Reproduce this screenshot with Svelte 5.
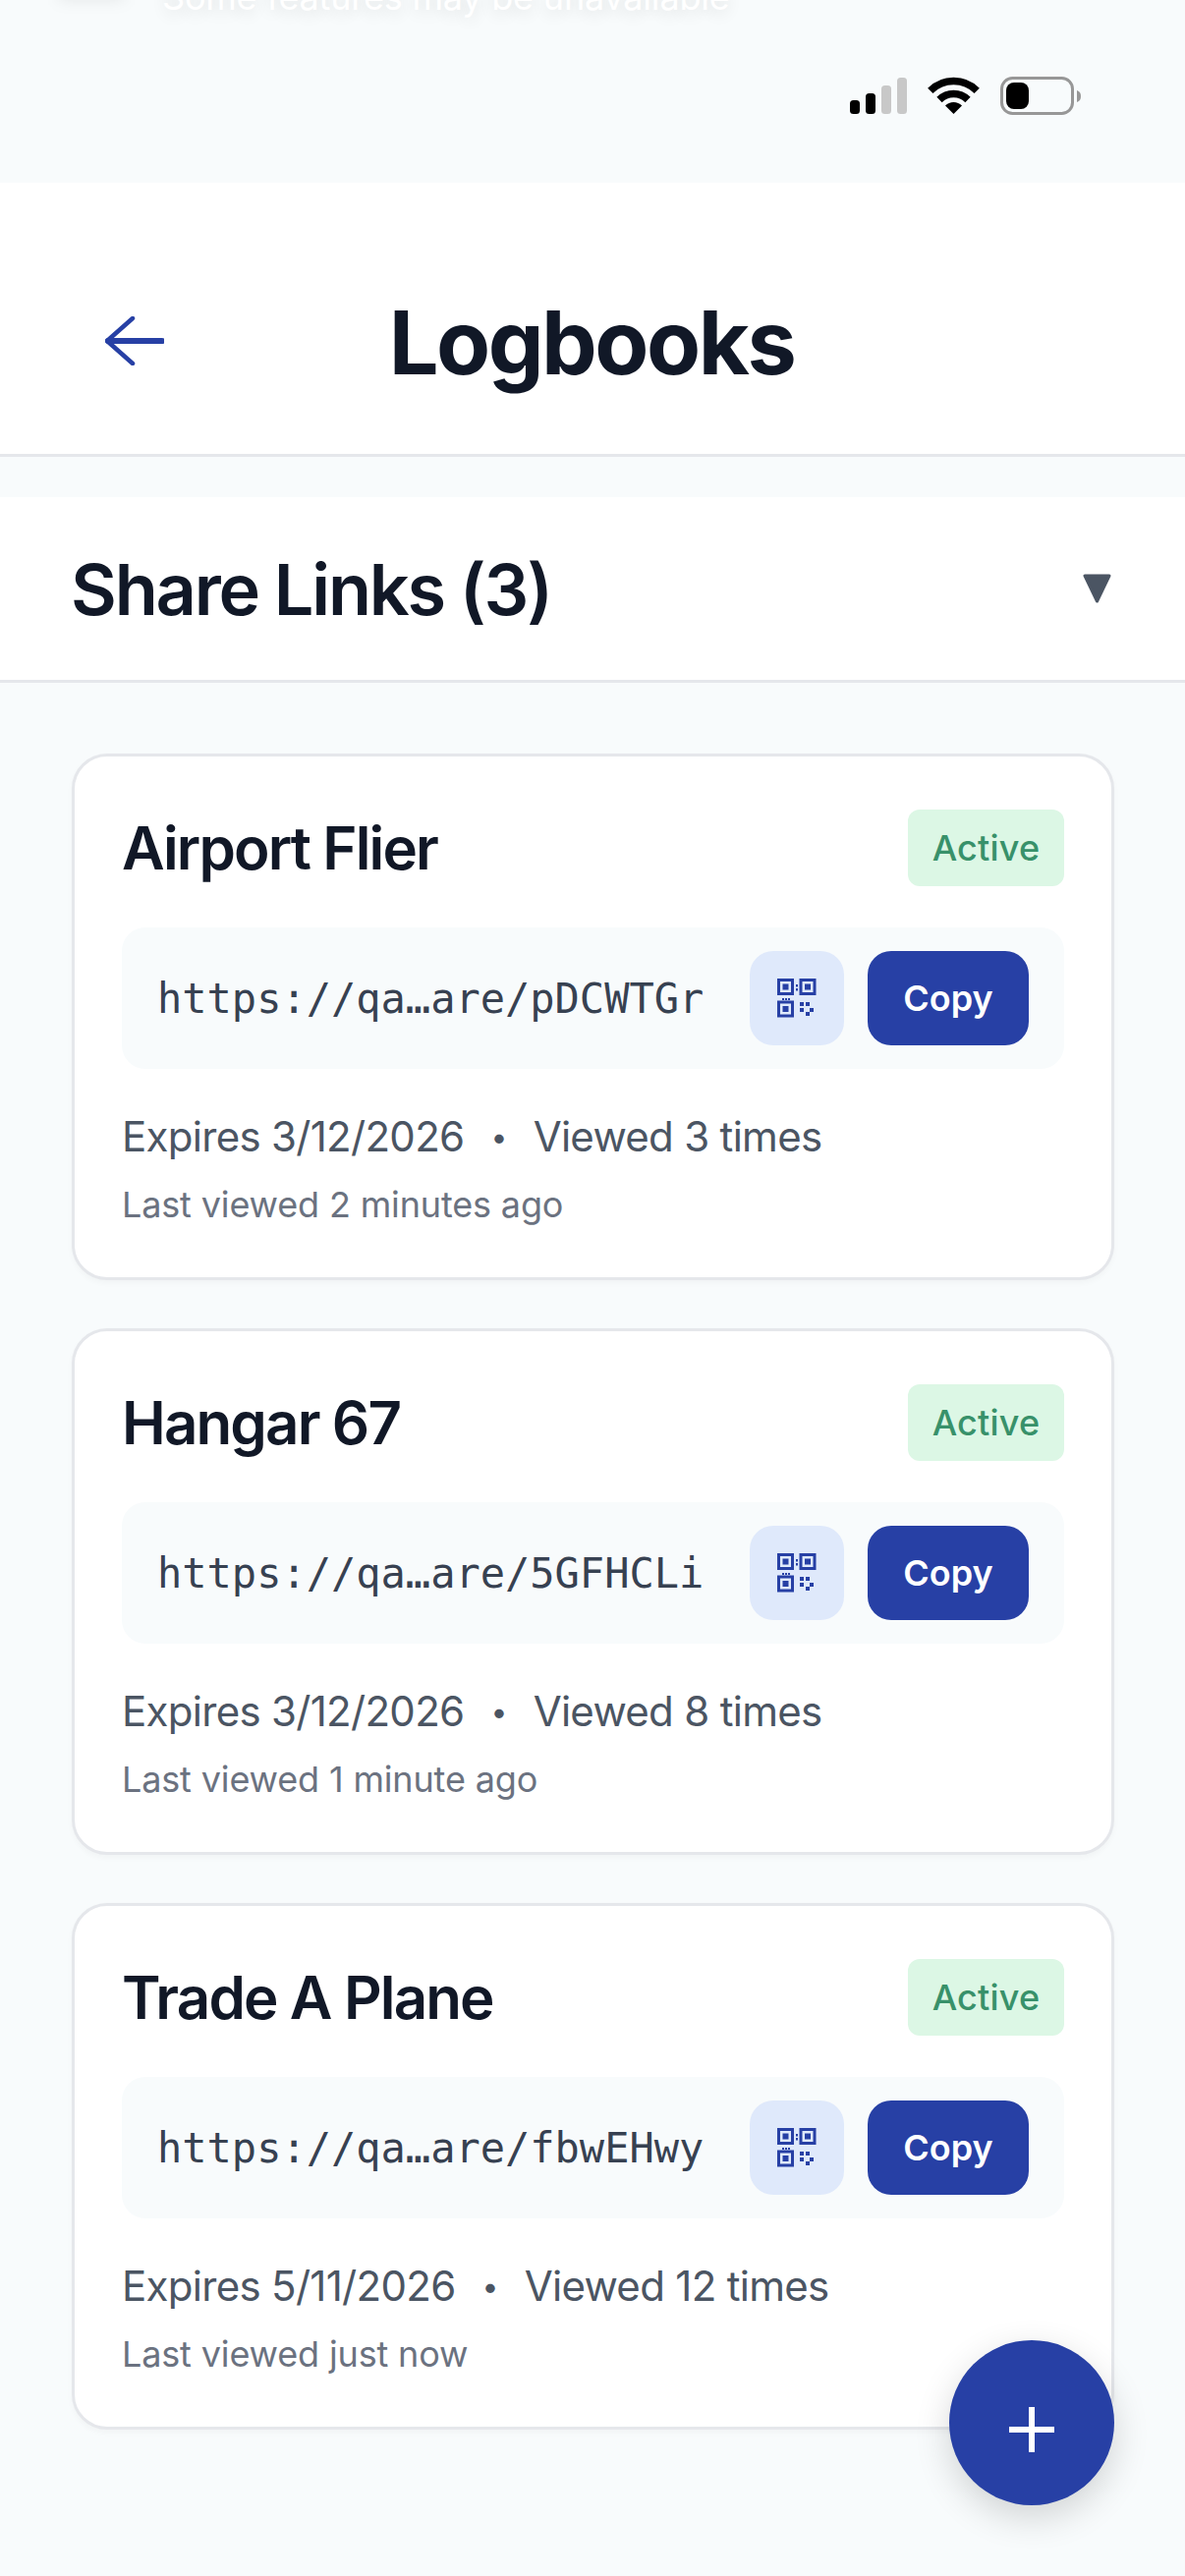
<script>
  const links = [
    { name: 'Airport Flier', url: 'https://qa…are/pDCWTGr', expires: '3/12/2026', views: 3, last: '2 minutes ago' },
    { name: 'Hangar 67', url: 'https://qa…are/5GFHCLi', expires: '3/12/2026', views: 8, last: '1 minute ago' },
    { name: 'Trade A Plane', url: 'https://qa…are/fbwEHwy', expires: '5/11/2026', views: 12, last: 'just now' }
  ];
</script>

<div class="screen">
  <div class="toast-blob"></div>
  <div class="toast-text">Some features may be unavailable</div>

  <div class="status">
    <svg class="status-icons" width="240" height="40" viewBox="0 0 240 40" aria-hidden="true">
      <rect x="5" y="24" width="10" height="14" rx="3.5" fill="#000" />
      <rect x="21" y="17" width="10" height="21" rx="3.5" fill="#000" />
      <rect x="37" y="9" width="10" height="29" rx="3.5" fill="#c8c8c8" />
      <rect x="53" y="1" width="10" height="37" rx="3.5" fill="#c8c8c8" />
      <path d="M86.8 14.3A33.5 33.5 0 0 1 134.2 14.3" fill="none" stroke="#000" stroke-width="7.5" />
      <path d="M96 23.5A20.5 20.5 0 0 1 125 23.5" fill="none" stroke="#000" stroke-width="7.5" />
      <path d="M110.5 38L102 29.5A12 12 0 0 1 119 29.5Z" fill="#000" />
      <rect x="159.5" y="1.5" width="72" height="36" rx="11" fill="none" stroke="#979797" stroke-width="3" />
      <rect x="164" y="6" width="23" height="27" rx="8" fill="#000" />
      <path d="M236 14C239 15 240 17 240 20C240 23 239 25 236 26Z" fill="#979797" />
    </svg>
  </div>

  <header class="topbar">
    <button class="back" type="button" aria-label="Back">
      <svg width="60" height="50" viewBox="0 0 60 50" fill="none" stroke="#2740a5" stroke-linecap="round" stroke-linejoin="round">
        <path d="M28 2L2 25L28 48" stroke-width="4.5" />
        <path d="M3 25H58" stroke-width="6" />
      </svg>
    </button>
    <h1>Logbooks</h1>
    <span></span>
  </header>

  <div class="section-head">
    <h2>Share Links (3)</h2>
    <svg width="29" height="30" viewBox="0 0 29 30" aria-hidden="true">
      <path d="M2 2H27L14.5 28Z" fill="#4b5563" stroke="#4b5563" stroke-width="3" stroke-linejoin="round" />
    </svg>
  </div>

  <div class="list">
    {#each links as link}
      <article class="card">
        <div class="card-top">
          <h3>{link.name}</h3>
          <span class="badge">Active</span>
        </div>
        <div class="url-row">
          <span class="url">{link.url}</span>
          <button class="qr" type="button" aria-label="QR code">
            <svg width="40" height="40" viewBox="0 0 40 40" fill="#2740a5" aria-hidden="true">
              <rect x="1.5" y="1.5" width="14" height="14" fill="none" stroke="#2740a5" stroke-width="3" />
              <rect x="5.5" y="5.5" width="6" height="6" />
              <rect x="24" y="1.5" width="14" height="14" fill="none" stroke="#2740a5" stroke-width="3" />
              <rect x="28" y="5.5" width="6" height="6" />
              <rect x="1.5" y="24" width="14" height="14" fill="none" stroke="#2740a5" stroke-width="3" />
              <rect x="5.5" y="28" width="6" height="6" />
              <rect x="19" y="6" width="2" height="2.5" />
              <rect x="19" y="10" width="2" height="2.5" />
              <rect x="5" y="20" width="2" height="2" />
              <rect x="8" y="20" width="2" height="2" />
              <rect x="11" y="20" width="2" height="2" />
              <rect x="23" y="24" width="4" height="4" />
              <rect x="29" y="24" width="4" height="4" />
              <rect x="23" y="30" width="4" height="4" />
              <rect x="33" y="30" width="4" height="4" />
              <rect x="29" y="34" width="4" height="4" />
            </svg>
          </button>
          <button class="copy" type="button">Copy</button>
        </div>
        <div class="meta">
          <span>Expires {link.expires}</span>
          <span class="dot">•</span>
          <span>Viewed {link.views} times</span>
        </div>
        <div class="last">Last viewed {link.last}</div>
      </article>
    {/each}
  </div>

  <button class="fab" type="button" aria-label="Add">
    <svg width="48" height="48" viewBox="0 0 48 48" aria-hidden="true">
      <path d="M24 1V47M1 24H47" stroke="#fff" stroke-width="6" fill="none" />
    </svg>
  </button>
</div>

<style>
  :global(body) {
    margin: 0;
    background: #f8fbfc;
  }

  .screen {
    position: relative;
    width: 1206px;
    height: 2622px;
    overflow: hidden;
    background: #f8fbfc;
    font-family: Inter, 'Liberation Sans', sans-serif;
    color: #111827;
  }

  .toast-text {
    position: absolute;
    left: 165px;
    top: -25px;
    font-size: 36px;
    line-height: 44px;
    letter-spacing: -0.2px;
    color: #fff;
    text-shadow: 0 4px 16px rgba(0, 0, 0, 0.12);
    white-space: nowrap;
  }

  .toast-blob {
    position: absolute;
    left: 60px;
    top: -30px;
    width: 66px;
    height: 30px;
    background: rgba(0, 0, 0, 0.08);
    filter: blur(8px);
  }

  .status {
    height: 186px;
    box-sizing: border-box;
    padding: 78px 0 0 860px;
  }

  .status-icons {
    display: block;
  }

  .topbar {
    height: 279px;
    box-sizing: border-box;
    display: grid;
    grid-template-columns: 1fr auto 1fr;
    align-items: center;
    padding: 50px 0 0 0;
    background: #fff;
    border-bottom: 3px solid #e5e7eb;
  }

  .back {
    justify-self: start;
    margin: 0 0 4px 107px;
    padding: 0;
    border: none;
    background: none;
    display: flex;
  }

  h1 {
    margin: 0 2px 0 0;
    font-size: 90px;
    line-height: 100px;
    font-weight: 700;
    letter-spacing: -2.5px;
  }

  .section-head {
    margin-top: 41px;
    height: 189px;
    box-sizing: border-box;
    display: flex;
    align-items: center;
    justify-content: space-between;
    padding: 0 75px 0 72px;
    background: #fff;
    border-bottom: 3px solid #e5e7eb;
  }

  h2 {
    margin: 2px 0 0;
    font-size: 72px;
    line-height: 84px;
    font-weight: 600;
    letter-spacing: -2.2px;
  }

  .list {
    display: flex;
    flex-direction: column;
    gap: 49px;
    padding: 72px 72px 0 73px;
  }

  .card {
    height: 536px;
    box-sizing: border-box;
    padding: 54px 48px 0;
    background: #fff;
    border: 3px solid #e5e7eb;
    border-radius: 36px;
    box-shadow: 0 3px 6px rgba(0, 0, 0, 0.03);
  }

  .card-top {
    display: flex;
    align-items: center;
    justify-content: space-between;
  }

  h3 {
    margin: 0;
    font-size: 60px;
    line-height: 72px;
    font-weight: 600;
    letter-spacing: -1.85px;
  }

  .badge {
    display: flex;
    align-items: center;
    justify-content: center;
    width: 159px;
    height: 78px;
    border-radius: 12px;
    background: #dcf7e5;
    color: #38916a;
    font-size: 36px;
    font-weight: 500;
    letter-spacing: 0.2px;
  }

  .url-row {
    display: flex;
    align-items: center;
    gap: 24px;
    margin-top: 42px;
    height: 144px;
    box-sizing: border-box;
    padding: 0 36px;
    background: #f8fbfc;
    border-radius: 24px;
  }

  .url {
    flex: 1;
    min-width: 0;
    font-family: 'DejaVu Sans Mono', 'Liberation Mono', monospace;
    font-size: 42px;
    color: #374151;
    white-space: nowrap;
  }

  .qr,
  .copy {
    height: 96px;
    border: none;
    border-radius: 24px;
    padding: 0;
    font-family: inherit;
  }

  .qr {
    width: 96px;
    display: flex;
    align-items: center;
    justify-content: center;
    background: #dfe9fb;
  }

  .copy {
    width: 164px;
    background: #2740a5;
    color: #fff;
    font-size: 36px;
    font-weight: 600;
  }

  .meta {
    display: flex;
    gap: 27px;
    margin-top: 43px;
    font-size: 42px;
    line-height: 52px;
    letter-spacing: -0.7px;
    color: #4b5563;
  }

  .dot {
    font-size: 30px;
  }

  .last {
    margin-top: 21px;
    font-size: 36px;
    line-height: 44px;
    letter-spacing: -0.15px;
    color: #6b7280;
  }

  .fab {
    position: absolute;
    left: 966px;
    top: 2382px;
    width: 168px;
    height: 168px;
    padding: 14px 0 0 0;
    border: none;
    border-radius: 50%;
    background: #2740a5;
    display: flex;
    align-items: center;
    justify-content: center;
    box-shadow: 0 12px 36px rgba(0, 0, 0, 0.16);
  }
</style>
